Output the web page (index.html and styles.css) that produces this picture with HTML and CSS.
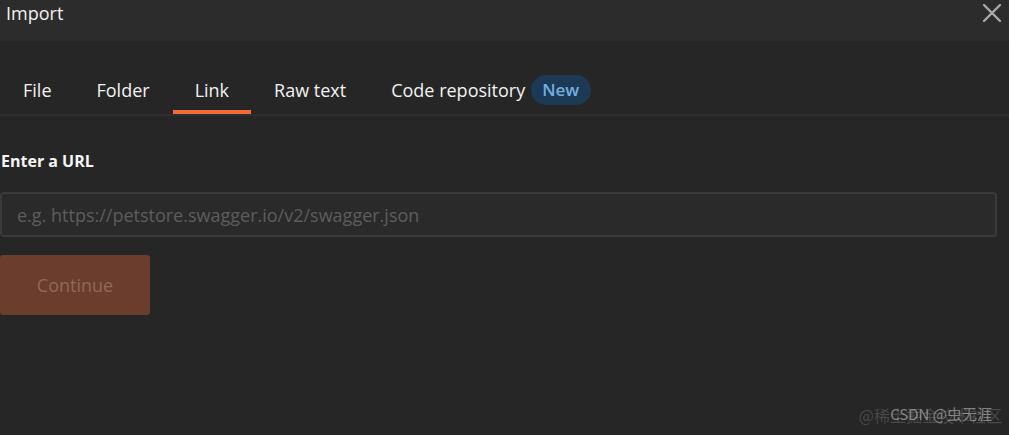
FILE: index.html
```html
<!DOCTYPE html>
<html lang="en">
<head>
    <meta charset="UTF-8">
    <meta name="viewport" content="width=device-width, initial-scale=1.0">
    <title>Import</title>
    <link rel="stylesheet" href="styles.css">
</head>
<body>

<div class="modal">
    <!-- Header -->
    <div class="modal-header">
        <span class="modal-title">Import</span>
        <button class="close-btn" aria-label="Close">
            <svg width="20" height="20" viewBox="0 0 20 20">
                <path d="M2 2 L18 18 M18 2 L2 18" stroke="#a9a9a9" stroke-width="2.4" stroke-linecap="round"/>
            </svg>
        </button>
    </div>

    <!-- Tabs -->
    <div class="tabs">
        <div class="tab">File</div>
        <div class="tab">Folder</div>
        <div class="tab active">Link</div>
        <div class="tab">Raw text</div>
        <div class="tab">Code repository <span class="badge">New</span></div>
    </div>

    <!-- Link form -->
    <div class="form">
        <label class="label" for="url">Enter a URL</label>
        <input class="url-input" id="url" type="text" placeholder="e.g. https://petstore.swagger.io/v2/swagger.json">
        <button class="continue-btn" disabled>Continue</button>
    </div>

    <div class="watermark">
        <span class="wm-a">@稀土掘金技术社区</span>
        <span class="wm-b">CSDN @虫无涯</span>
    </div>
</div>

</body>
</html>
```

FILE: styles.css
```css
body {
    margin: 0;
    padding: 0;
    background-color: #262626;
    font-family: "Open Sans", Arial, sans-serif;
    color: #f0f0f0;
}
.modal {
    position: relative;
    width: 1009px;
    height: 435px;
    overflow: hidden;
    background-color: #262626;
}
.modal-header {
    height: 41px;
    background-color: #2c2c2c;
    display: flex;
    justify-content: space-between;
    align-items: flex-start;
    padding: 0 7px 0 6px;
}
.modal-title {
    font-size: 18px;
    line-height: 26px;
    color: #f2f2f2;
}
.close-btn {
    background: none;
    border: none;
    padding: 0;
    margin-top: 3px;
    width: 20px;
    height: 20px;
    cursor: pointer;
}
.tabs {
    display: flex;
    gap: 1px;
    padding-left: 1px;
    margin-top: 29px;
    border-bottom: 2px solid #2f2f2f;
}
.tab {
    display: flex;
    align-items: center;
    padding: 0 22px;
    height: 44px;
    font-size: 18px;
    color: #f2f2f2;
    border-bottom: 4px solid transparent;
    box-sizing: border-box;
    white-space: nowrap;
}
.tab.active {
    border-bottom-color: #f26b3a;
}
.badge {
    margin-left: 6px;
    background-color: #1c3a55;
    color: #74aee0;
    font-weight: 600;
    padding: 3px 12px 4px 11px;
    border-radius: 16px;
    font-size: 17px;
}
.form {
    display: flex;
    flex-direction: column;
    align-items: flex-start;
}
.label {
    margin-top: 35px;
    font-size: 16px;
    font-weight: 700;
    color: #f5f5f5;
    line-height: 20px;
    padding-left: 1px;
}
.url-input {
    margin-top: 21px;
    width: 997px;
    height: 45px;
    box-sizing: border-box;
    background-color: #2a2a2a;
    border: 2px solid #3a3a3a;
    border-radius: 4px;
    padding: 0 15px;
    font-family: "Open Sans", Arial, sans-serif;
    font-size: 18px;
    color: #ddd;
    outline: none;
}
.url-input::placeholder {
    color: #5d5d5d;
}
.continue-btn {
    margin-top: 18px;
    width: 150px;
    height: 60px;
    background-color: #6b3d2c;
    color: #8e6a59;
    border: none;
    border-radius: 3px;
    font-family: "Open Sans", Arial, sans-serif;
    font-size: 18px;
}
.watermark {
    position: absolute;
    right: 7px;
    bottom: 8px;
    font-size: 16px;
    font-family: "Noto Sans CJK SC", sans-serif;
}
.wm-a {
    color: rgba(140, 140, 140, 0.35);
}
.wm-b {
    position: absolute;
    right: 10px;
    top: 0;
    color: rgba(210, 210, 210, 0.55);
    font-size: 15px;
    white-space: nowrap;
}
```
